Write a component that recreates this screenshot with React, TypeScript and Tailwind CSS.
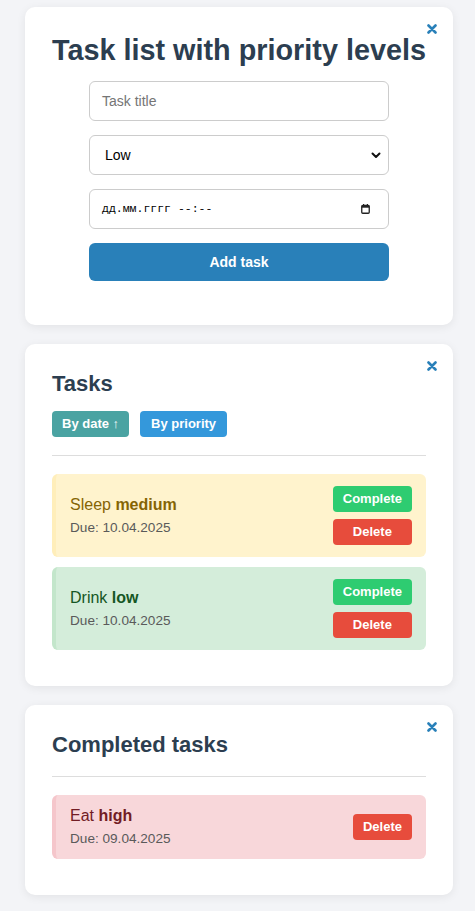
import React from "react";

const font = { fontFamily: '"Liberation Sans", Arial, sans-serif' };

function CloseX() {
  return (
    <svg
      className="absolute top-[17px] right-[16px]"
      width="10"
      height="10"
      viewBox="0 0 10 10"
    >
      <path d="M1.5 1.5 L8.5 8.5 M8.5 1.5 L1.5 8.5" stroke="#2980b9" strokeWidth="2.6" strokeLinecap="round" />
    </svg>
  );
}

function Card({ children, className }: { children: React.ReactNode; className: string }) {
  return (
    <div
      className={
        "relative bg-white rounded-[10px] shadow-[0_2px_10px_rgba(0,0,0,0.07)] px-[27px] pt-[27px] " +
        className
      }
    >
      <CloseX />
      {children}
    </div>
  );
}

type Task = {
  title: string;
  prio: string;
  due: string;
  bg: string;
  border: string;
  text: string;
  completed?: boolean;
};

function TaskItem({ t }: { t: Task }) {
  return (
    <div
      className={`flex items-center justify-between rounded-[6px] border-l-4 pl-[14px] pr-[14px] py-[12px] ${t.bg} ${t.border}`}
    >
      <div>
        <div className={`text-[16px] leading-[18px] ${t.text}`}>
          {t.title} <span className="font-bold">{t.prio}</span>
        </div>
        <div className="mt-[6px] text-[13.6px] leading-[16px] text-[#5a5a5a]">Due: {t.due}</div>
      </div>
      <div className="flex flex-col gap-[7px]">
        {!t.completed && (
          <button className="h-[26px] px-[10px] rounded-[4px] bg-[#2ecc71] text-white text-[13px] font-bold">
            Complete
          </button>
        )}
        <button className="h-[26px] px-[10px] rounded-[4px] bg-[#e74c3c] text-white text-[13px] font-bold">
          Delete
        </button>
      </div>
    </div>
  );
}

export default function App() {
  const tasks: Task[] = [
    {
      title: "Sleep",
      prio: "medium",
      due: "10.04.2025",
      bg: "bg-[#fff3cd]",
      border: "border-[#ffeeba]",
      text: "text-[#856404]",
    },
    {
      title: "Drink",
      prio: "low",
      due: "10.04.2025",
      bg: "bg-[#d4edda]",
      border: "border-[#c3e6cb]",
      text: "text-[#155724]",
    },
  ];
  const done: Task = {
    title: "Eat",
    prio: "high",
    due: "09.04.2025",
    bg: "bg-[#f8d7da]",
    border: "border-[#f5c6cb]",
    text: "text-[#721c24]",
    completed: true,
  };

  return (
    <div className="min-h-[911px] bg-[#f3f4f7] pt-[7px] pb-[17px]" style={font}>
      <div className="ml-[25px] w-[428px] flex flex-col gap-[19px]">
        <Card className="pb-[44px]">
          <h1 className="text-center text-[28.8px] leading-[33px] font-bold text-[#2c3e50]">
            Task list with priority levels
          </h1>
          <div className="mt-[14px] mx-auto w-[300px] flex flex-col gap-[14px]">
            <div className="h-[40px] rounded-[6px] border border-[#ccc] bg-white flex items-center px-[12px] text-[14px] text-[#757575]">
              Task title
            </div>
            <div className="h-[40px] rounded-[6px] border border-[#ccc] bg-white flex items-center justify-between pl-[15px] pr-[7px] text-[14px] text-black">
              <span>Low</span>
              <svg width="10" height="7" viewBox="0 0 10 7">
                <path d="M1.5 1.5 L5 5 L8.5 1.5" stroke="#111" strokeWidth="2" fill="none" strokeLinecap="round" strokeLinejoin="round" />
              </svg>
            </div>
            <div className="h-[40px] rounded-[6px] border border-[#ccc] bg-white flex items-center justify-between pl-[12px] pr-[18px]">
              <span
                className="text-[11.5px] text-black whitespace-pre"
                style={{ fontFamily: '"Liberation Mono", "DejaVu Sans Mono", monospace' }}
              >
                дд.мм.гггг --:--
              </span>
              <svg width="9" height="10" viewBox="0 0 9 10">
                <rect x="0.75" y="1.5" width="7.5" height="7.75" rx="1" stroke="#222" strokeWidth="1.3" fill="none" />
                <rect x="0.75" y="1.5" width="7.5" height="2.2" fill="#222" />
                <rect x="2" y="0" width="1.2" height="2" fill="#222" />
                <rect x="5.8" y="0" width="1.2" height="2" fill="#222" />
              </svg>
            </div>
            <button className="h-[38px] rounded-[6px] bg-[#2980b9] text-white text-[14px] font-bold">
              Add task
            </button>
          </div>
        </Card>

        <Card className="pb-[36px]">
          <h2 className="text-[22px] leading-[25px] font-bold text-[#2c3e50]">Tasks</h2>
          <div className="mt-[15px] flex gap-[11px]">
            <button className="h-[26px] px-[10px] rounded-[4px] bg-[#4aa3a2] text-white text-[13px] font-bold">
              By date ↑
            </button>
            <button className="h-[26px] px-[11px] rounded-[4px] bg-[#3498db] text-white text-[13px] font-bold">
              By priority
            </button>
          </div>
          <div className="mt-[18px] h-px bg-[#ddd]" />
          <div className="mt-[18px] flex flex-col gap-[10px]">
            {tasks.map((t) => (
              <TaskItem key={t.title} t={t} />
            ))}
          </div>
        </Card>

        <Card className="pb-[36px]">
          <h2 className="text-[22px] leading-[25px] font-bold text-[#2c3e50]">Completed tasks</h2>
          <div className="mt-[19px] h-px bg-[#ddd]" />
          <div className="mt-[18px] flex flex-col gap-[10px]">
            <TaskItem t={done} />
          </div>
        </Card>
      </div>
    </div>
  );
}
